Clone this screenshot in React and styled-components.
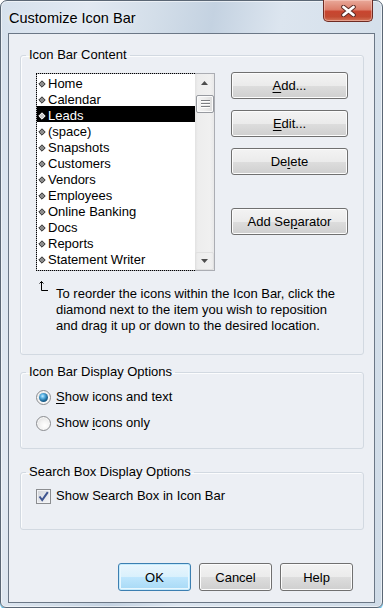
import React from 'react';
import styled, { createGlobalStyle } from 'styled-components';

const GlobalStyle = createGlobalStyle`
  html, body {
    margin: 0;
    padding: 0;
    background: #ffffff;
  }
  body {
    font-family: "Liberation Sans", Arial, sans-serif;
    font-size: 13px;
    color: #000;
  }
  * {
    box-sizing: border-box;
  }
`;

const ITEMS = [
  'Home',
  'Calendar',
  'Leads',
  '(space)',
  'Snapshots',
  'Customers',
  'Vendors',
  'Employees',
  'Online Banking',
  'Docs',
  'Reports',
  'Statement Writer',
];

const Window = styled.div`
  width: 383px;
  height: 608px;
  border: 1px solid #5b6775;
  border-radius: 7px 7px 6px 6px;
  padding: 0 7px 4px;
  display: flex;
  flex-direction: column;
  background: linear-gradient(
    100deg,
    #d6e1ed 0%,
    #e2e9f2 18%,
    #d3dee9 32%,
    #c4d2e1 44%,
    #dce5ef 58%,
    #d5e0eb 78%,
    #cfdbe7 100%
  );
  box-shadow: inset 0 0 0 1px rgba(255, 255, 255, 0.55), 0 1px 0 #55bdee, 0 2px 0 #b5e3f7;
`;

const TitleBar = styled.div`
  height: 32px;
  display: flex;
  justify-content: space-between;
  align-items: flex-start;
`;

const Title = styled.div`
  padding: 8px 0 0 1px;
  font-size: 14.5px;
  line-height: 18px;
  color: #000;
  text-shadow: 0 0 6px rgba(255, 255, 255, 0.9);
`;

const CloseButton = styled.div`
  width: 50px;
  height: 22px;
  margin: -1px 2px 0 0;
  border: 1px solid #6e2b23;
  border-top: none;
  border-radius: 0 0 5px 5px;
  display: flex;
  align-items: center;
  justify-content: center;
  background: linear-gradient(
    to bottom,
    #e9a99a 0%,
    #dc7f6c 45%,
    #c8452f 55%,
    #c24a31 80%,
    #d4765a 100%
  );
  box-shadow: inset 0 0 0 1px rgba(255, 220, 210, 0.45);
`;

const Client = styled.div`
  flex: 1;
  border: 1px solid #6b7786;
  background: #eceff4;
  padding: 0 10px 11px 11px;
  display: flex;
  flex-direction: column;
`;

const Group = styled.fieldset`
  margin: ${(p) => p.$top}px 0 0;
  padding: 0;
  min-width: 0;
  border: 1px solid #d2d9e1;
  border-radius: 3px;
  box-shadow: inset 1px 1px 0 #fbfcfd;
`;

const Legend = styled.legend`
  margin-left: 5px;
  padding: 0 3px;
  line-height: 16px;
  font-size: 13px;
`;

const GroupBody = styled.div`
  padding: ${(p) => p.$pad};
`;

const ContentRow = styled.div`
  display: flex;
  gap: 16px;
  align-items: flex-start;
`;

const ListBox = styled.div`
  margin-top: 1px;
  width: 179px;
  height: 198px;
  border: 1px solid #abadb3;
  background: #fff;
  display: flex;
`;

const Items = styled.div`
  flex: 1;
  margin: -1px 0 -1px -1px;
  border: 1px dotted #000;
  border-right: none;
`;

const Item = styled.div`
  height: 16px;
  line-height: 16px;
  display: flex;
  align-items: center;
  padding: 3px 0 0 1px;
  background: ${(p) => (p.$selected ? '#000' : 'transparent')};
  color: ${(p) => (p.$selected ? '#fff' : '#000')};
  white-space: nowrap;
`;

const ItemText = styled.span`
  margin-left: 2px;
`;

const ScrollBar = styled.div`
  width: 19px;
  display: flex;
  flex-direction: column;
  background: linear-gradient(to right, #e2e2e2 0%, #ededed 15%, #f0f0f0 80%, #e9e9e9 100%);
`;

const ArrowButton = styled.div`
  height: ${(p) => p.$h}px;
  display: flex;
  align-items: center;
  justify-content: center;
  border: 1px solid ${(p) => (p.$framed ? '#e0e0e0' : 'transparent')};
  border-radius: 2px;
`;

const Track = styled.div`
  flex: 1;
  padding-top: 4px;
`;

const Thumb = styled.div`
  height: 18px;
  margin-left: 1px;
  border: 1px solid #979aa0;
  border-radius: 2px;
  display: flex;
  align-items: center;
  justify-content: center;
  background: linear-gradient(to right, #f5f5f5 0%, #ececec 50%, #dcdcdc 100%);
  box-shadow: inset 0 0 0 1px #fbfbfb;
`;

const ButtonColumn = styled.div`
  width: 117px;
  display: flex;
  flex-direction: column;
  gap: 11px;
`;

const Button = styled.div`
  width: ${(p) => p.$w || 117}px;
  height: ${(p) => p.$h || 27}px;
  margin-top: ${(p) => p.$gapTop || 0}px;
  border: 1px solid ${(p) => (p.$default ? '#3c7fb1' : '#707070')};
  border-radius: 3px;
  display: flex;
  align-items: center;
  justify-content: center;
  font-size: 13px;
  color: #000;
  background: ${(p) =>
    p.$default
      ? 'linear-gradient(to bottom, #eaf6fd 0%, #d9f0fc 50%, #bee6fd 51%, #a7d9f5 100%)'
      : 'linear-gradient(to bottom, #f3f3f3 0%, #ebebeb 50%, #dddddd 51%, #cfcfcf 100%)'};
  box-shadow: ${(p) =>
    p.$default ? 'inset 0 0 0 1px #c5eafc, inset 0 0 0 2px #e8f7fe' : 'inset 0 0 0 1px #fcfcfc'};
`;

const Key = styled.span`
  text-decoration: underline;
  text-underline-offset: 2px;
`;

const Hint = styled.div`
  margin-top: 15px;
  display: flex;
  align-items: flex-start;
`;

const HintIcon = styled.svg`
  margin: -6px 0 0 1px;
  flex: none;
`;

const HintText = styled.div`
  margin-left: 7px;
  line-height: 16px;
`;

const OptionRow = styled.div`
  height: 16px;
  display: flex;
  align-items: center;
  gap: 5px;
  line-height: 16px;
  & + & {
    margin-top: 10px;
  }
`;

const Radio = styled.span`
  width: 15px;
  height: 15px;
  border-radius: 50%;
  border: 1px solid #8b8d90;
  display: flex;
  align-items: center;
  justify-content: center;
  background: radial-gradient(circle at 60% 65%, #ffffff 0%, #f3f3f3 40%, #d8d8d8 100%);
  box-shadow: inset 0 0 0 1px #f7f7f7;
  &::after {
    content: '';
    width: 9px;
    height: 9px;
    border-radius: 50%;
    display: ${(p) => (p.$checked ? 'block' : 'none')};
    background: radial-gradient(
      circle at 40% 35%,
      #c4ecff 0%,
      #5fb6e6 25%,
      #1c6797 60%,
      #0f3c5d 100%
    );
  }
`;

const Check = styled.span`
  width: 15px;
  height: 15px;
  border: 1px solid #8b8d90;
  display: flex;
  align-items: center;
  justify-content: center;
  background: linear-gradient(135deg, #d0d3d8 0%, #e4e6ea 50%, #f4f5f7 100%);
  box-shadow: inset 0 0 0 1px #f2f3f5;
`;

const ButtonRow = styled.div`
  margin: auto 11px 0 0;
  display: flex;
  justify-content: flex-end;
  gap: 8px;
`;

const Diamond = ({ selected }) => (
  <svg width="8" height="8" viewBox="0 0 8 8">
    <polygon
      points="4,0.8 7.2,4 4,7.2 0.8,4"
      fill={selected ? '#c8c8c8' : '#8c8c8c'}
      stroke={selected ? '#ffffff' : '#2f2f2f'}
      strokeWidth="1"
    />
  </svg>
);

const UpArrow = () => (
  <svg width="7" height="4" viewBox="0 0 7 4">
    <polygon points="3.5,0 7,4 0,4" fill="#4d4d4d" />
  </svg>
);

const DownArrow = () => (
  <svg width="7" height="4" viewBox="0 0 7 4">
    <polygon points="0,0 7,0 3.5,4" fill="#4d4d4d" />
  </svg>
);

const Grip = () => (
  <svg width="9" height="9" viewBox="0 0 9 9">
    {[0.5, 3.5, 6.5].map((y) => (
      <g key={y}>
        <line x1="0" y1={y} x2="9" y2={y} stroke="#7d7f83" strokeWidth="1" />
        <line x1="0" y1={y + 1} x2="9" y2={y + 1} stroke="#ffffff" strokeWidth="1" />
      </g>
    ))}
  </svg>
);

export default function App() {
  return (
    <>
      <GlobalStyle />
      <Window>
        <TitleBar>
          <Title>Customize Icon Bar</Title>
          <CloseButton>
            <svg width="15" height="12" viewBox="0 0 15 12">
              <path d="M2.5 2 L12.5 10 M12.5 2 L2.5 10" stroke="#5a2a24" strokeWidth="4.6" strokeLinecap="round" />
              <path d="M2.5 2 L12.5 10 M12.5 2 L2.5 10" stroke="#ffffff" strokeWidth="2.8" strokeLinecap="round" />
            </svg>
          </CloseButton>
        </TitleBar>

        <Client>
          <Group $top={13}>
            <Legend>Icon Bar Content</Legend>
            <GroupBody $pad="9px 15px 20px 15px">
              <ContentRow>
                <ListBox>
                  <Items>
                    {ITEMS.map((item) => (
                      <Item key={item} $selected={item === 'Leads'}>
                        <Diamond selected={item === 'Leads'} />
                        <ItemText>{item}</ItemText>
                      </Item>
                    ))}
                  </Items>
                  <ScrollBar>
                    <ArrowButton $h={17}>
                      <UpArrow />
                    </ArrowButton>
                    <Track>
                      <Thumb>
                        <Grip />
                      </Thumb>
                    </Track>
                    <ArrowButton $h={18} $framed>
                      <DownArrow />
                    </ArrowButton>
                  </ScrollBar>
                </ListBox>

                <ButtonColumn>
                  <Button>
                    <Key>A</Key>dd...
                  </Button>
                  <Button>
                    <Key>E</Key>dit...
                  </Button>
                  <Button>
                    De<Key>l</Key>ete
                  </Button>
                  <Button $gapTop={22}>
                    Add Se<Key>p</Key>arator
                  </Button>
                </ButtonColumn>
              </ContentRow>

              <Hint>
                <HintIcon width="12" height="12" viewBox="0 0 12 12">
                  <path d="M4.5 1.5 V10.5 H11" fill="none" stroke="#000" strokeWidth="1" />
                  <path d="M2.5 3.5 L4.5 1.5 L6.5 3.5" fill="none" stroke="#000" strokeWidth="1" />
                </HintIcon>
                <HintText>
                  To reorder the icons within the Icon Bar, click the
                  <br />
                  diamond next to the item you wish to reposition
                  <br />
                  and drag it up or down to the desired location.
                </HintText>
              </Hint>
            </GroupBody>
          </Group>

          <Group $top={9}>
            <Legend>Icon Bar Display Options</Legend>
            <GroupBody $pad="9px 15px 17px 15px">
              <OptionRow>
                <Radio $checked />
                <span>
                  <Key>S</Key>how icons and text
                </span>
              </OptionRow>
              <OptionRow>
                <Radio />
                <span>
                  Show <Key>i</Key>cons only
                </span>
              </OptionRow>
            </GroupBody>
          </Group>

          <Group $top={15}>
            <Legend>Search Box Display Options</Legend>
            <GroupBody $pad="8px 15px 25px 15px">
              <OptionRow>
                <Check>
                  <svg width="11" height="11" viewBox="0 0 11 11">
                    <path d="M1.5 5.5 L4.2 9 L9.8 1.2" fill="none" stroke="#3f5590" strokeWidth="2" />
                  </svg>
                </Check>
                <span>Show Search Box in Icon Bar</span>
              </OptionRow>
            </GroupBody>
          </Group>

          <ButtonRow>
            <Button $w={73} $h={28} $default>
              OK
            </Button>
            <Button $w={73} $h={28}>
              Cancel
            </Button>
            <Button $w={73} $h={28}>
              Help
            </Button>
          </ButtonRow>
        </Client>
      </Window>
    </>
  );
}
